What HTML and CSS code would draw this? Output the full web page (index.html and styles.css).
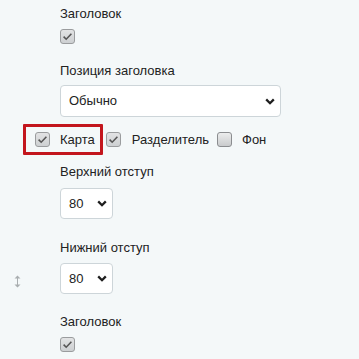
FILE: index.html
```html
<!DOCTYPE html>
<html lang="ru">
<head>
<meta charset="utf-8">
<link rel="stylesheet" href="styles.css">
</head>
<body>
<div class="panel">
  <div class="label l1">Заголовок</div>
  <div class="cbwrap c1"><span class="cb"><svg width="13" height="13" viewBox="0 0 13 13"><path d="M2.6 6.6 L5.2 9.2 L10.4 3.8" fill="none" stroke="#555" stroke-width="1.6"/></svg></span></div>

  <div class="label l2">Позиция заголовка</div>
  <div class="select wide"><span>Обычно</span><svg width="10" height="7" viewBox="0 0 10 7"><path d="M1.2 1.4 L5 5.2 L8.8 1.4" fill="none" stroke="#1e1e1e" stroke-width="2.3"/></svg></div>

  <div class="cbrow">
    <label class="item hl"><span class="cb"><svg width="13" height="13" viewBox="0 0 13 13"><path d="M2.6 6.6 L5.2 9.2 L10.4 3.8" fill="none" stroke="#555" stroke-width="1.6"/></svg></span><span>Карта</span></label>
    <label class="item i2"><span class="cb"><svg width="13" height="13" viewBox="0 0 13 13"><path d="M2.6 6.6 L5.2 9.2 L10.4 3.8" fill="none" stroke="#555" stroke-width="1.6"/></svg></span><span>Разделитель</span></label>
    <label class="item i3"><span class="cb off"></span><span>Фон</span></label>
  </div>

  <div class="label l3">Верхний отступ</div>
  <div class="select small"><span>80</span><svg width="10" height="7" viewBox="0 0 10 7"><path d="M1.2 1.4 L5 5.2 L8.8 1.4" fill="none" stroke="#1e1e1e" stroke-width="2.3"/></svg></div>

  <div class="label l4">Нижний отступ</div>
  <div class="handlerow">
    <div class="handle"><svg width="7" height="13" viewBox="0 0 7 13"><path d="M3.5 0.5 L6.5 3.5 L0.5 3.5 Z M3.5 12.5 L6.5 9.5 L0.5 9.5 Z" fill="#a9aeb0"/><rect x="3" y="3" width="1" height="7" fill="#a9aeb0"/></svg></div>
    <div class="select small s2"><span>80</span><svg width="10" height="7" viewBox="0 0 10 7"><path d="M1.2 1.4 L5 5.2 L8.8 1.4" fill="none" stroke="#1e1e1e" stroke-width="2.3"/></svg></div>
  </div>

  <div class="label l5">Заголовок</div>
  <div class="cbwrap c1"><span class="cb"><svg width="13" height="13" viewBox="0 0 13 13"><path d="M2.6 6.6 L5.2 9.2 L10.4 3.8" fill="none" stroke="#555" stroke-width="1.6"/></svg></span></div>
</div>
</body>
</html>
```
FILE: styles.css
```css
* { box-sizing: border-box; }
html, body {
  margin: 0;
  padding: 0;
  background: #f4f8f9;
  font-family: "Liberation Sans", Arial, sans-serif;
  font-size: 13px;
  color: #222;
}
.panel {
  padding: 6px 0 0 60px;
  display: flex;
  flex-direction: column;
  align-items: flex-start;
}
.label {
  line-height: 16px;
  height: 16px;
  white-space: nowrap;
}
.l2 { margin-top: 19px; }
.l3 { margin-top: 9px; }
.l4 { margin-top: 21px; }
.l5 { margin-top: 20px; }
.cbwrap {
  margin-top: 7px;
  display: flex;
}
.cb {
  width: 15px;
  height: 15px;
  border: 1px solid #9a9c9e;
  border-radius: 3px;
  background: linear-gradient(#e2e3e4, #cdd0d2);
  display: flex;
  align-items: center;
  justify-content: center;
  flex: none;
}
.cb.off {
  border-color: #8b8d90;
  background: linear-gradient(#eceded, #c9cbcd);
}
.select {
  margin-top: 6px;
  background: #fff;
  border: 1px solid #cdd5d9;
  border-radius: 4px;
  display: flex;
  align-items: center;
  justify-content: space-between;
  padding: 0 5px 0 8px;
  line-height: 16px;
}
.select.wide { width: 221px; height: 32px; }
.select.small { width: 53px; height: 31px; margin-top: 8px; }
.select.small.s2 { margin-top: 0; }
.cbrow {
  margin-top: 7px;
  margin-left: -37px;
  height: 31px;
  display: flex;
  align-items: center;
}
.item {
  display: flex;
  align-items: center;
  gap: 10px;
  height: 31px;
  white-space: nowrap;
}
.hl {
  border: 3px solid #c3161d;
  border-radius: 1px;
  padding: 0 5px 0 9px;
}
.i2 { margin-left: 3px; gap: 11px; }
.i3 { margin-left: 8px; gap: 10px; }
.handlerow {
  margin-top: 7px;
  margin-left: -60px;
  display: flex;
  align-items: center;
}
.handle {
  width: 60px;
  padding-left: 14px;
  padding-top: 5px;
  display: flex;
}
```
